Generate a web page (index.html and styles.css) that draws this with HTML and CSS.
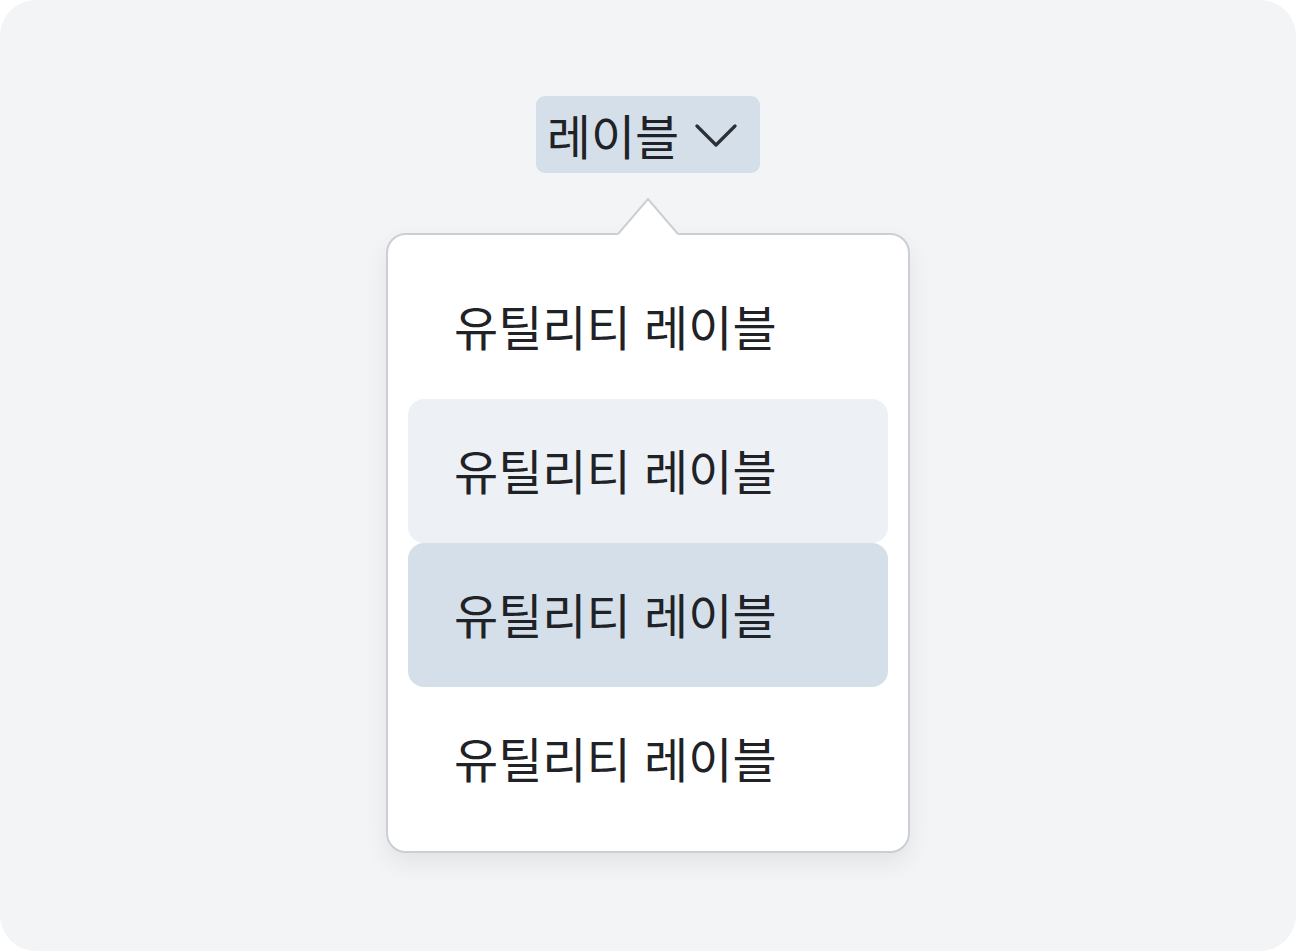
FILE: index.html
```html
<!DOCTYPE html>
<html lang="ko">
<head>
  <meta charset="UTF-8" />
  <meta name="viewport" content="width=device-width, initial-scale=1.0" />
  <title>유틸리티 메뉴</title>
  <link rel="stylesheet" href="styles.css">
</head>
<body>
  <div class="frame">
    <button class="trigger" type="button">
      <span>레이블</span>
      <svg class="chevron" width="42" height="26" viewBox="0 0 42 26">
        <path d="M2 3 L21 22 L40 3" fill="none" stroke="#2b2f36" stroke-width="3.2" stroke-linecap="round" stroke-linejoin="round" />
      </svg>
    </button>

    <div class="popover">
      <svg class="arrow" width="60" height="37" viewBox="0 0 60 37">
        <polygon points="0,36 30,1 60,36 60,37 0,37" fill="#fff" />
        <polyline points="0,36 30,1 60,36" fill="none" stroke="#cbced3" stroke-width="2" />
      </svg>
      <ul class="menu">
        <li class="item">유틸리티 레이블</li>
        <li class="item hover">유틸리티 레이블</li>
        <li class="item active">유틸리티 레이블</li>
        <li class="item">유틸리티 레이블</li>
      </ul>
    </div>
  </div>
</body>
</html>
```

FILE: styles.css
```css
html, body {
  margin: 0;
  background: #fff;
}
body {
  font-family: "Noto Sans CJK KR", "Noto Sans", sans-serif;
  color: #1f2226;
}
.frame {
  width: 1296px;
  height: 951px;
  box-sizing: border-box;
  background: #f3f4f6;
  border-radius: 36px;
  display: flex;
  flex-direction: column;
  align-items: center;
  padding-top: 96px;
}
.trigger {
  display: flex;
  align-items: center;
  gap: 16px;
  height: 77px;
  box-sizing: border-box;
  padding: 0 23px 2px 11px;
  background: #d5dfe9;
  border: none;
  border-radius: 9px;
  font-family: inherit;
  font-size: 48px;
  color: #1f2226;
  line-height: 1;
}
.chevron {
  display: block;
  margin-top: 4px;
}
.popover {
  position: relative;
  margin-top: 60px;
  width: 524px;
  box-sizing: border-box;
  background: #fff;
  border: 2px solid #cbced3;
  border-radius: 20px;
  padding: 20px;
  box-shadow: 0 10px 24px rgba(0, 0, 0, 0.07);
}
.arrow {
  position: absolute;
  top: -37px;
  left: 50%;
  transform: translateX(-50%);
  display: block;
}
.menu {
  list-style: none;
  margin: 0;
  padding: 0;
}
.item {
  height: 144px;
  box-sizing: border-box;
  display: flex;
  align-items: center;
  padding: 0 0 4px 46px;
  border-radius: 16px;
  font-size: 48px;
}
.item.hover {
  background: #edf0f5;
}
.item.active {
  background: #d5dfe9;
}
```
